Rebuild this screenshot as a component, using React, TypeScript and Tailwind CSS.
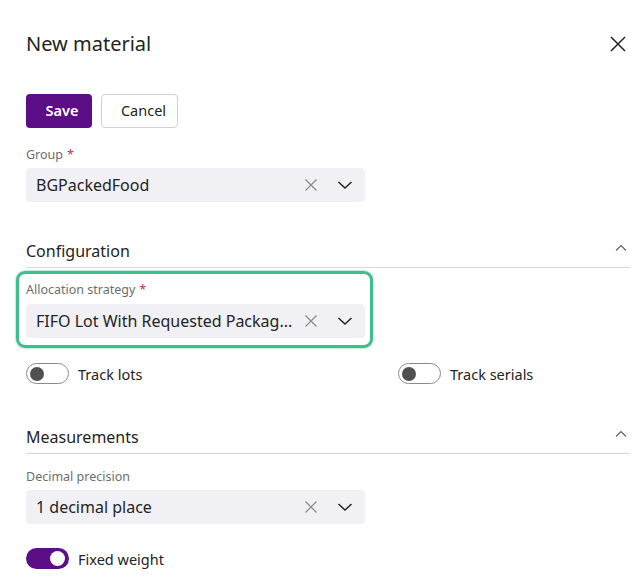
import React from "react";

const font = { fontFamily: '"Noto Sans", "Open Sans", sans-serif' };

function ClearIcon() {
  return (
    <svg width="14" height="14" viewBox="0 0 14 14" className="text-[#8a8a8a]">
      <path d="M1.5 1.5 L12.5 12.5 M12.5 1.5 L1.5 12.5" stroke="currentColor" strokeWidth="1.2" fill="none" />
    </svg>
  );
}

function ChevronDown() {
  return (
    <svg width="16" height="10" viewBox="0 0 16 10" className="text-[#242424]">
      <path d="M1.5 2 L8 8 L14.5 2" stroke="currentColor" strokeWidth="1.5" fill="none" />
    </svg>
  );
}

function ChevronUp() {
  return (
    <svg width="12" height="8" viewBox="0 0 12 8" className="text-[#616161]">
      <path d="M1 6.5 L6 1.5 L11 6.5" stroke="currentColor" strokeWidth="1.2" fill="none" />
    </svg>
  );
}

function Select({ value }: { value: string }) {
  return (
    <div className="flex items-center h-[34px] w-[339px] rounded-[4px] bg-[#f0f0f5] pl-[10px] pr-[12px]">
      <span className="flex-1 min-w-0 text-[16px] leading-[24px] text-[#242424] whitespace-nowrap">{value}</span>
      <span className="flex items-center justify-center w-[14px] mr-[19px] shrink-0">
        <ClearIcon />
      </span>
      <span className="shrink-0 flex">
        <ChevronDown />
      </span>
    </div>
  );
}

function Label({ text, required }: { text: string; required?: boolean }) {
  return (
    <div className="text-[12.5px] leading-[18px] text-[#6e6e6e]">
      {text}
      {required && <span className="text-[#c4314b] ml-[4px]">*</span>}
    </div>
  );
}

function Toggle({ on, label }: { on?: boolean; label: string }) {
  return (
    <div className="flex items-center">
      {on ? (
        <div className="w-[43px] h-[21px] rounded-full bg-[#5b0e86] flex items-center justify-end pr-[4px]">
          <div className="w-[15px] h-[15px] rounded-full bg-white" />
        </div>
      ) : (
        <div className="w-[43px] h-[21px] rounded-full border border-[#8a8a8a] flex items-center pl-[3px]">
          <div className="w-[14px] h-[14px] rounded-full bg-[#505050]" />
        </div>
      )}
      <span className="ml-[9px] text-[14.5px] leading-[20px] text-[#242424]">{label}</span>
    </div>
  );
}

function SectionHeader({ title }: { title: string }) {
  return (
    <div className="flex items-start justify-between h-[29px] border-b border-[#d6d6d6] w-[604px] box-border">
      <span className="text-[16px] leading-[24px] text-[#242424]">{title}</span>
      <span className="mr-[3px] mt-[5px]">
        <ChevronUp />
      </span>
    </div>
  );
}

export default function App() {
  return (
    <div className="w-[641px] h-[584px] bg-white overflow-hidden relative" style={font}>
      <div className="pl-[26px] flex flex-col">
        <div className="pt-[30px] flex items-center justify-between w-[600px]">
          <h1 className="text-[20px] leading-[28px] text-[#242424] font-normal">New material</h1>
          <svg width="16" height="16" viewBox="0 0 16 16" className="text-[#242424]">
            <path d="M1 1 L15 15 M15 1 L1 15" stroke="currentColor" strokeWidth="1.5" fill="none" />
          </svg>
        </div>

        <div className="mt-[36px] flex gap-[9px]">
          <button className="h-[34px] w-[66px] rounded-[4px] bg-[#5b0e86] text-white text-[14.5px] font-semibold pl-[6px]">Save</button>
          <button className="h-[34px] w-[77px] rounded-[4px] border border-[#d1d1d1] bg-white text-[14.5px] text-[#242424] pl-[8px]">Cancel</button>
        </div>

        <div className="mt-[18px]">
          <Label text="Group" required />
        </div>
        <div className="mt-[4px]">
          <Select value="BGPackedFood" />
        </div>

        <div className="mt-[37px]">
          <SectionHeader title="Configuration" />
        </div>

        <div className="mt-[3px] -ml-[10px] w-[357px] rounded-[9px] border-[3px] border-[#3dbf8c] shadow-[0_0_2px_#3dbf8c] px-[7px] py-[7px]">
          <Label text="Allocation strategy" required />
          <div className="mt-[5px]">
            <Select value="FIFO Lot With Requested Packag..." />
          </div>
        </div>

        <div className="mt-[15px] grid grid-cols-[372px_1fr]">
          <Toggle label="Track lots" />
          <Toggle label="Track serials" />
        </div>

        <div className="mt-[41px]">
          <SectionHeader title="Measurements" />
        </div>

        <div className="mt-[14px]">
          <Label text="Decimal precision" />
        </div>
        <div className="mt-[4px]">
          <Select value="1 decimal place" />
        </div>

        <div className="mt-[24px]">
          <Toggle on label="Fixed weight" />
        </div>
      </div>
    </div>
  );
}
